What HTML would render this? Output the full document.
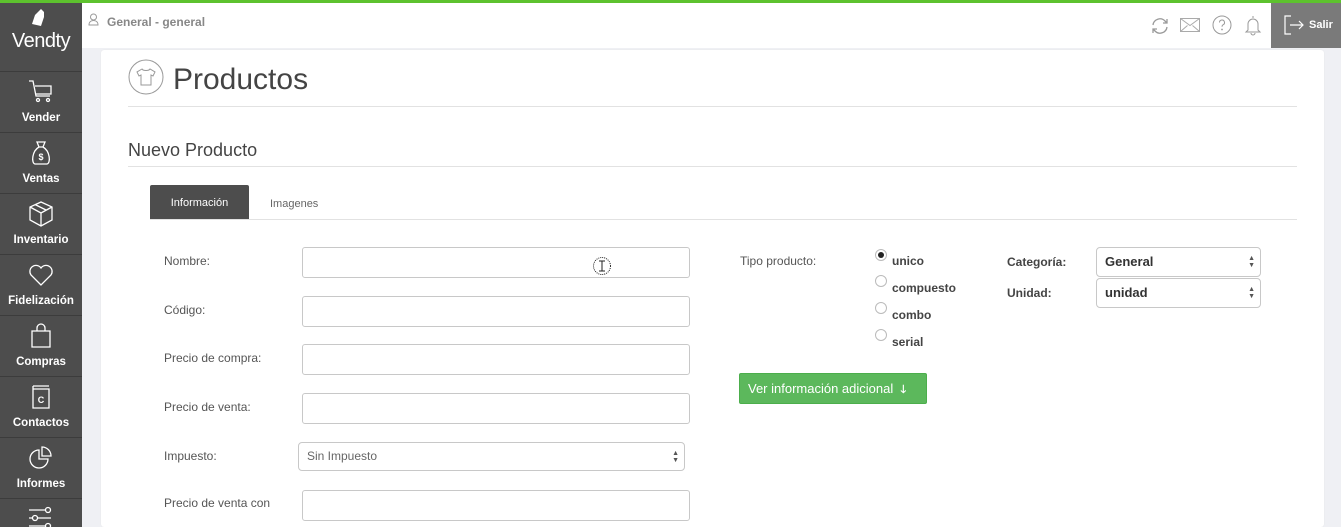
<!DOCTYPE html>
<html style="width:1341px;height:527px;overflow:hidden"><head><meta charset="utf-8"><style>
*{margin:0;padding:0;box-sizing:border-box}
body{width:1341px;height:527px;overflow:hidden;background:#eff0f4;font-family:"Liberation Sans",sans-serif;position:relative;color:#555}
.a{position:absolute}
#top{left:0;top:0;width:1341px;height:3px;background:#5dc22e}
#hdr{left:82px;top:3px;width:1259px;height:45px;background:#fff}
#side{left:0;top:3px;width:82px;height:524px;background:#4d4d4d;overflow:hidden}
.it{position:absolute;left:0;width:82px;height:61px;border-top:1px solid #3c3c3c;color:#fff;font-weight:bold;font-size:11.5px;text-align:center}
.it span{position:absolute;left:0;right:0;bottom:8px}
.it svg{position:absolute;left:27px;top:6px}
#panel{left:101px;top:50px;width:1223px;height:477px;background:#fff;border-radius:3px;box-shadow:0 0 1px #ddd}
.hr{position:absolute;left:128px;width:1169px;height:1px;background:#e2e2e2}
.lbl{position:absolute;left:164px;font-size:12px;color:#555}
.inp{position:absolute;left:302px;width:388px;height:31px;border:1px solid #c8c8c8;border-radius:3px;background:#fff}
.rad{position:absolute;left:875px;width:12px;height:12px;border:1px solid #bbb;border-radius:50%;background:#fff}
.rl{position:absolute;left:892px;font-size:12px;font-weight:bold;color:#444}
.sel{position:absolute;border:1px solid #c8c8c8;border-radius:4px;background:#fff;font-size:13px;font-weight:bold;color:#333;padding:6px 8px}
.arr{position:absolute;right:5px;top:7px;font-size:7px;line-height:7px;color:#555}
</style></head><body>
<div class="a" id="top"></div>
<div class="a" id="hdr">
 <svg class="a" style="left:6px;top:10px" width="11" height="13" viewBox="0 0 11 13" fill="none" stroke="#999"><circle cx="5.5" cy="4" r="3"/><path d="M1 12c0-3 2-4.5 4.5-4.5S10 9 10 12z"/></svg>
 <div class="a" style="left:25px;top:12px;font-size:12px;font-weight:bold;color:#888">General - general</div>
 <svg class="a" style="left:1068px;top:13px" width="20" height="20" viewBox="0 0 20 20" fill="none" stroke="#999" stroke-width="1.3"><path d="M3 9a7 7 0 0 1 12-4l2 2M17 11a7 7 0 0 1-12 4l-2-2M17 3v4h-4M3 17v-4h4"/></svg>
 <svg class="a" style="left:1098px;top:15px" width="20" height="14" viewBox="0 0 20 14" fill="none" stroke="#aaa"><rect x=".5" y=".5" width="19" height="13"/><path d="M.5 .5l9.5 7 9.5-7M.5 13.5l7-6M19.5 13.5l-7-6"/></svg>
 <svg class="a" style="left:1130px;top:12px" width="20" height="20" viewBox="0 0 20 20" fill="none" stroke="#999"><circle cx="10" cy="10" r="9"/><path d="M7.5 7.5a2.5 2.5 0 1 1 3.5 2.3c-.8.4-1 1-1 2"/><circle cx="10" cy="14.5" r=".4"/></svg>
 <svg class="a" style="left:1162px;top:11px" width="18" height="22" viewBox="0 0 18 22" fill="none" stroke="#999"><path d="M9 2v2M4 16V10a5 5 0 0 1 10 0v6l2 2H2zM7 19a2 2 0 0 0 4 0"/></svg>
 <div class="a" style="left:1189px;top:0;width:70px;height:45px;background:#7a7a7a">
  <svg class="a" style="left:12px;top:11px" width="22" height="22" viewBox="0 0 22 22" fill="none" stroke="#fff" stroke-width="1.2"><path d="M8 2H2v18h6M7 11h13M16 7l4 4-4 4"/></svg>
  <div class="a" style="left:38px;top:16px;font-size:11px;font-weight:bold;color:#fff">Salir</div>
 </div>
</div>
<div class="a" id="side">
 <svg class="a" style="left:30px;top:5px" width="20" height="22" viewBox="0 0 20 22"><path d="M5 7l6-6 3 3v5l-3 9-9-2z" fill="#fff"/></svg>
 <div class="a" style="left:0;width:82px;top:27px;text-align:center;color:#fff;font-size:20px;letter-spacing:-0.5px">Vendty</div>
 <div class="it" style="top:68px"><svg width="28" height="28" viewBox="0 0 28 28" fill="none" stroke="#fff" stroke-width="1.3"><path d="M2 3h4l3 15h14M8 8h16v8H9"/><circle cx="11" cy="22" r="1.5"/><circle cx="21" cy="22" r="1.5"/></svg><span>Vender</span></div>
 <div class="it" style="top:129px"><svg width="28" height="28" viewBox="0 0 28 28" fill="none" stroke="#fff" stroke-width="1.3"><path d="M10 3h8l-2 5h-4zM12 8C5 12 4 24 8 25h12c4-1 3-13-4-17"/><text x="14" y="21" font-size="9" fill="#fff" stroke="none" text-anchor="middle" font-family="Liberation Sans">$</text></svg><span>Ventas</span></div>
 <div class="it" style="top:190px"><svg width="28" height="28" viewBox="0 0 28 28" fill="none" stroke="#fff" stroke-width="1.3"><path d="M14 2l11 5v13l-11 6-11-6V7zM3 7l11 6 11-6M14 13v13M8 4.5l11 5.5"/></svg><span>Inventario</span></div>
 <div class="it" style="top:251px"><svg width="28" height="28" viewBox="0 0 28 28" fill="none" stroke="#fff" stroke-width="1.3"><path d="M14 24L4 14a5.5 5.5 0 0 1 10-7 5.5 5.5 0 0 1 10 7z"/></svg><span>Fidelización</span></div>
 <div class="it" style="top:312px"><svg width="28" height="28" viewBox="0 0 28 28" fill="none" stroke="#fff" stroke-width="1.3"><path d="M5 9h18v16H5zM10 9V6a4 4 0 0 1 8 0v3"/></svg><span>Compras</span></div>
 <div class="it" style="top:373px"><svg width="28" height="28" viewBox="0 0 28 28" fill="none" stroke="#fff" stroke-width="1.3"><path d="M6 3h16M6 6h16v19H6zM6 3v3"/><text x="14" y="20" font-size="9" fill="#fff" stroke="none" text-anchor="middle" font-family="Liberation Sans">C</text></svg><span>Contactos</span></div>
 <div class="it" style="top:434px"><svg width="28" height="28" viewBox="0 0 28 28" fill="none" stroke="#fff" stroke-width="1.3"><path d="M12 6a9 9 0 1 0 9 9h-9zM15 3v9h9a9 9 0 0 0-9-9z"/></svg><span>Informes</span></div>
 <div class="it" style="top:495px"><svg width="28" height="28" viewBox="0 0 28 28" fill="none" stroke="#fff" stroke-width="1.3"><path d="M2 5h16M2 13h4M10 13h14M2 21h16"/><circle cx="21" cy="5" r="2.5"/><circle cx="8" cy="13" r="2.5"/><circle cx="21" cy="21" r="2.5"/></svg></div>
</div>
<div class="a" id="panel"></div>
<svg class="a" style="left:128px;top:59px" width="36" height="36" viewBox="0 0 36 36" fill="none" stroke="#999"><circle cx="18" cy="18" r="17"/><path d="M14 10l-5 3 2 4 2-1v10h10V16l2 1 2-4-5-3c-1 2-7 2-8 0z"/></svg>
<div class="a" style="left:173px;top:63px;font-size:30px;color:#444">Productos</div>
<div class="hr" style="top:106px"></div>
<div class="a" style="left:128px;top:140px;font-size:18px;color:#444">Nuevo Producto</div>
<div class="hr" style="top:166px"></div>
<div class="a" style="left:150px;top:185px;width:99px;height:34px;background:#4d4d4d;border-radius:2px 2px 0 0;color:#fff;font-size:11px;text-align:center;line-height:36px">Información</div>
<div class="a" style="left:270px;top:198px;font-size:11px;color:#666">Imagenes</div>
<div class="hr" style="top:219px;left:150px;width:1147px"></div>

<div class="lbl" style="top:254px">Nombre:</div><div class="inp" style="top:247px"></div>
<svg class="a" style="left:592px;top:256px" width="20" height="20" viewBox="0 0 20 20" fill="none" stroke="#222"><circle cx="10" cy="10" r="8.5" stroke-dasharray="1 1"/><path d="M7 5h6M7 15h6M10 5v10"/></svg>
<div class="lbl" style="top:303px">Código:</div><div class="inp" style="top:296px"></div>
<div class="lbl" style="top:351px">Precio de compra:</div><div class="inp" style="top:344px"></div>
<div class="lbl" style="top:400px">Precio de venta:</div><div class="inp" style="top:393px"></div>
<div class="lbl" style="top:449px">Impuesto:</div>
<div class="sel" style="left:298px;top:442px;width:387px;height:29px;font-weight:normal;color:#666;font-size:12px">Sin Impuesto<div class="arr">▲<br>▼</div></div>
<div class="lbl" style="top:496px">Precio de venta con</div><div class="inp" style="top:490px"></div>

<div class="a" style="left:740px;top:254px;font-size:12px;color:#555">Tipo producto:</div>
<div class="rad" style="top:249px"><div style="margin:2px;width:6px;height:6px;border-radius:50%;background:#222"></div></div>
<div class="rl" style="top:254px">unico</div>
<div class="rad" style="top:275px"></div><div class="rl" style="top:281px">compuesto</div>
<div class="rad" style="top:302px"></div><div class="rl" style="top:308px">combo</div>
<div class="rad" style="top:329px"></div><div class="rl" style="top:335px">serial</div>
<div class="a" style="left:1007px;top:255px;font-size:12px;font-weight:bold;color:#444">Categoría:</div>
<div class="a" style="left:1007px;top:286px;font-size:12px;font-weight:bold;color:#444">Unidad:</div>
<div class="sel" style="left:1096px;top:247px;width:165px;height:30px">General<div class="arr">▲<br>▼</div></div>
<div class="sel" style="left:1096px;top:278px;width:165px;height:30px">unidad<div class="arr">▲<br>▼</div></div>
<div class="a" style="left:739px;top:373px;width:188px;height:31px;background:#5cb85c;border:1px solid #4cae4c;border-radius:2px;color:#fff;font-size:13px;line-height:29px;padding-left:8px">Ver información adicional &nbsp;<b style="font-size:11px">🡓</b></div>
</body></html>
